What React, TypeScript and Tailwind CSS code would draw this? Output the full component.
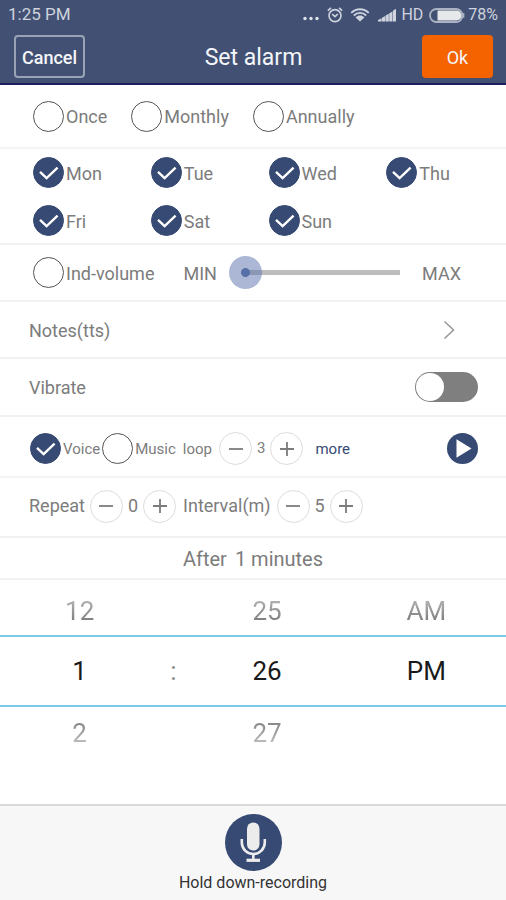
import { useState } from "react";

function CheckOption({
  label,
  initial = false,
  small = false,
}: {
  label: string;
  initial?: boolean;
  small?: boolean;
}) {
  const [on, setOn] = useState(initial);
  return (
    <label className={small ? "flex items-center gap-0.5 text-[15px]" : "flex items-center gap-0.5 text-lg"}>
      <span className="grid size-[31px] shrink-0">
        <input
          type="checkbox"
          checked={on}
          onChange={() => setOn(!on)}
          className="peer col-start-1 row-start-1 size-[31px] appearance-none rounded-full border border-[#555] bg-white checked:border-[#364a74] checked:bg-[#364a74]"
        />
        <svg
          viewBox="0 0 31 31"
          className="pointer-events-none col-start-1 row-start-1 hidden size-[31px] peer-checked:block"
          fill="none"
          stroke="#fff"
          strokeWidth="2.4"
          aria-hidden="true"
        >
          <path d="M7 14.8 13.6 21 24.6 10.6" />
        </svg>
      </span>
      <span className="pt-0.5">{label}</span>
    </label>
  );
}

function RoundButton({ label, plus, onClick }: { label: string; plus?: boolean; onClick: () => void }) {
  return (
    <button
      type="button"
      aria-label={label}
      onClick={onClick}
      className="flex size-[33px] shrink-0 items-center justify-center rounded-full border border-[#dcdcdc] bg-white"
    >
      <svg viewBox="0 0 16 16" className="size-4" stroke="#7c7c7c" strokeWidth="1.8" aria-hidden="true">
        <path d={plus ? "M1 8H15M8 1V15" : "M1 8H15"} />
      </svg>
    </button>
  );
}

function Stepper({ name, initial }: { name: string; initial: number }) {
  const [value, setValue] = useState(initial);
  return (
    <div className="flex items-center gap-[5px]">
      <RoundButton label={`Decrease ${name}`} onClick={() => setValue(Math.max(0, value - 1))} />
      <output>{value}</output>
      <RoundButton label={`Increase ${name}`} plus onClick={() => setValue(value + 1)} />
    </div>
  );
}

function StatusBar() {
  return (
    <div className="flex h-[30px] items-center justify-between px-2 text-base text-[#ced3de]">
      <span className="text-[17px]">1:25 PM</span>
      <div className="flex items-center">
        <svg viewBox="0 0 16 16" className="mr-2 size-4" fill="#dfe3ea" aria-hidden="true">
          <circle cx="2" cy="11.5" r="1.7" />
          <circle cx="8" cy="11.5" r="1.7" />
          <circle cx="14" cy="11.5" r="1.7" />
        </svg>
        <svg viewBox="0 0 16 16" className="mr-[7px] size-4" fill="none" stroke="#ced3de" strokeWidth="1.6" aria-hidden="true">
          <circle cx="8" cy="8.6" r="6" />
          <path d="M.8 3.6 4 .8M15.2 3.6 12 .8M5.2 7.2 8 9.6 10.8 7" />
        </svg>
        <svg viewBox="0 0 20 16" className="mr-2 h-4 w-5" fill="none" stroke="#ced3de" strokeWidth="1.8" aria-hidden="true">
          <path d="M1.2 5.9C6.2 1 13.8 1 18.8 5.9M3.8 8.5C7.4 5 12.6 5 16.2 8.5" />
          <path d="M5.6 10.4C8.2 8 11.8 8 14.4 10.4L10 14.6Z" fill="#ced3de" stroke="none" />
        </svg>
        <svg viewBox="0 0 18 14" className="mr-[5px] h-3.5 w-[18px]" fill="#ced3de" aria-hidden="true">
          <path d="M0 13.5V12L3.6 10.2V13.5ZM4 13.5V9.8L7.2 8V13.5ZM7.6 13.5V7.6L10.8 5.8V13.5ZM11.2 13.5V5.4L14.4 3.4V13.5ZM14.9 13.5V2.8L18 .8V13.5Z" />
        </svg>
        <span className="mr-1.5">HD</span>
        <svg viewBox="0 0 36 15" className="mr-[3px] h-[15px] w-9" aria-hidden="true">
          <rect x="1" y="1" width="32.5" height="13" rx="6.5" fill="none" stroke="#aab2c3" strokeWidth="1.8" />
          <path d="M8.5 2.4H27.5A5.1 5.1 0 0 1 27.5 12.6H8.5Z" fill="#e6e8ea" />
          <path d="M34.6 5.2V9.8" stroke="#aab2c3" strokeWidth="1.6" />
        </svg>
        <span>78%</span>
      </div>
    </div>
  );
}

const days = ["Mon", "Tue", "Wed", "Thu", "Fri", "Sat", "Sun"];

export default function App() {
  const [volume, setVolume] = useState(0);
  const [vibrate, setVibrate] = useState(false);

  return (
    <div className="flex min-h-screen flex-col bg-white font-[Roboto,sans-serif] text-lg text-[#7c7c7c]">
      <header className="border-b-2 border-[#1d1c62] bg-[#425173]">
        <StatusBar />
        <div className="flex items-center justify-between py-[5px] pr-[13px] pl-3.5 text-[#f4f6fa]">
          <button type="button" className="h-[43px] w-[71px] rounded border-2 border-[#9aa2b5] pt-0.5 font-medium">
            Cancel
          </button>
          <h1 className="pt-0.5 text-[23px]">Set alarm</h1>
          <button type="button" className="h-[43px] w-[71px] rounded bg-[#f56200] pt-0.5">
            Ok
          </button>
        </div>
      </header>

      <main className="flex flex-1 flex-col">
        <section className="flex h-[64px] items-center gap-6 border-b-2 border-[#f4f4f4] pl-[33px]">
          <CheckOption label="Once" />
          <CheckOption label="Monthly" />
          <CheckOption label="Annually" />
        </section>

        <section className="grid grid-cols-4 gap-y-[17px] border-b-2 border-[#f1f1f1] pt-2 pr-0.5 pb-[7px] pl-[33px]">
          {days.map((day) => (
            <CheckOption key={day} label={day} initial />
          ))}
        </section>

        <section className="flex h-[57px] items-center border-b-2 border-[#f1f1f1] pr-[45px] pl-[33px]">
          <CheckOption label="Ind-volume" />
          <span className="ml-[29px] pt-0.5">MIN</span>
          <input
            type="range"
            aria-label="Volume"
            min={0}
            max={100}
            value={volume}
            onChange={(e) => setVolume(Number(e.target.value))}
            className="mr-[22px] ml-3 h-[33px] min-w-0 flex-1 appearance-none bg-transparent [&::-webkit-slider-runnable-track]:h-[5px] [&::-webkit-slider-runnable-track]:bg-[linear-gradient(to_right,transparent_16px,#bdbdbd_16px)] [&::-webkit-slider-thumb]:-mt-[14px] [&::-webkit-slider-thumb]:size-[33px] [&::-webkit-slider-thumb]:appearance-none [&::-webkit-slider-thumb]:rounded-full [&::-webkit-slider-thumb]:bg-[radial-gradient(circle,#5870a8_4px,rgba(88,112,172,0.5)_5px)]"
          />
          <span className="pt-0.5">MAX</span>
        </section>

        <button type="button" className="flex h-[57px] items-center justify-between border-b-2 border-[#f1f1f1] pr-[51px] pl-[29px]">
          <span className="pt-0.5">Notes(tts)</span>
          <svg viewBox="0 0 12 20" className="h-5 w-3" fill="none" stroke="#999" strokeWidth="1.6" aria-hidden="true">
            <path d="M1.5 1.5 10.5 10 1.5 18.5" />
          </svg>
        </button>

        <label className="flex h-[58px] items-center justify-between border-b-2 border-[#f1f1f1] pr-7 pl-[29px]">
          <span className="pt-0.5">Vibrate</span>
          <input
            type="checkbox"
            role="switch"
            checked={vibrate}
            onChange={() => setVibrate(!vibrate)}
            className="flex h-[30px] w-[63px] appearance-none items-center rounded-full bg-[#7f7f7f] p-px before:size-7 before:rounded-full before:bg-white checked:justify-end checked:bg-[#364a74]"
          />
        </label>

        <section className="flex h-[61px] items-center border-b-2 border-[#f4f4f4] pt-1 pr-7 pl-[30px] text-[15px]">
          <div className="flex items-center gap-0.5">
            <CheckOption label="Voice" initial small />
            <CheckOption label="Music" small />
          </div>
          <span className="mr-[7px] ml-[7px] pt-0.5">loop</span>
          <Stepper name="loop" initial={3} />
          <a href="#more" className="ml-3 pt-0.5 text-[#364a74]">
            more
          </a>
          <button type="button" aria-label="Play" className="ml-auto rounded-full bg-[#364a74]">
            <svg viewBox="0 0 31 31" className="size-[31px]" fill="#fff" aria-hidden="true">
              <path d="M9.5 6.2 24.5 15.5 9.5 24.8Z" />
            </svg>
          </button>
        </section>

        <section className="flex h-[60px] items-center border-b-2 border-[#f1f1f1] pb-0.5 pl-[29px]">
          <span className="mr-[5px]">Repeat</span>
          <Stepper name="repeat" initial={0} />
          <span className="mr-1.5 ml-[7px]">Interval(m)</span>
          <Stepper name="interval" initial={5} />
        </section>

        <p className="flex h-[42px] items-center justify-center gap-2 border-b-2 border-[#f1f1f1] pt-px text-xl">
          <span>After</span>
          <span>1 minutes</span>
        </p>

        <section aria-label="Time" className="text-[26px] leading-[48px]">
          <div className="grid grid-cols-[1fr_28px_1fr_1fr] pt-[7px] text-center text-[#777] [mask-image:linear-gradient(to_bottom,rgba(0,0,0,0.5)_30%,black_80%)]">
            <button type="button">12</button>
            <span />
            <button type="button">25</button>
            <button type="button">AM</button>
          </div>
          <div className="grid h-[72px] grid-cols-[1fr_28px_1fr_1fr] items-center border-y-2 border-[#7cc8e6] text-center text-[#1a1a1a]">
            <span>1</span>
            <span className="text-[#8a8a8a]">:</span>
            <span>26</span>
            <span>PM</span>
          </div>
          <div className="grid grid-cols-[1fr_28px_1fr_1fr] pt-0.5 text-center text-[#777] [mask-image:linear-gradient(to_top,rgba(0,0,0,0.5)_30%,black_80%)]">
            <button type="button">2</button>
            <span />
            <button type="button">27</button>
          </div>
        </section>
      </main>

      <footer className="flex flex-col items-center border-t-2 border-[#d9d9d9] bg-[#f7f7f7] pt-2 pb-[5px] text-base text-[#333]">
        <button type="button" className="flex flex-col items-center">
          <svg viewBox="0 0 57 57" className="size-[57px]" fill="none" aria-hidden="true">
            <circle cx="28.5" cy="28.5" r="28.5" fill="#364a74" />
            <rect x="22" y="8.5" width="12.5" height="28" rx="6.2" fill="#ececec" />
            <path d="M16.8 25V28.5A11.5 11.5 0 0 0 39.8 28.5V25M28.3 40V46" stroke="#ececec" strokeWidth="2.6" />
            <path d="M21.5 46.3H35" stroke="#ececec" strokeWidth="3.2" />
          </svg>
          <span>Hold down-recording</span>
        </button>
      </footer>
    </div>
  );
}
